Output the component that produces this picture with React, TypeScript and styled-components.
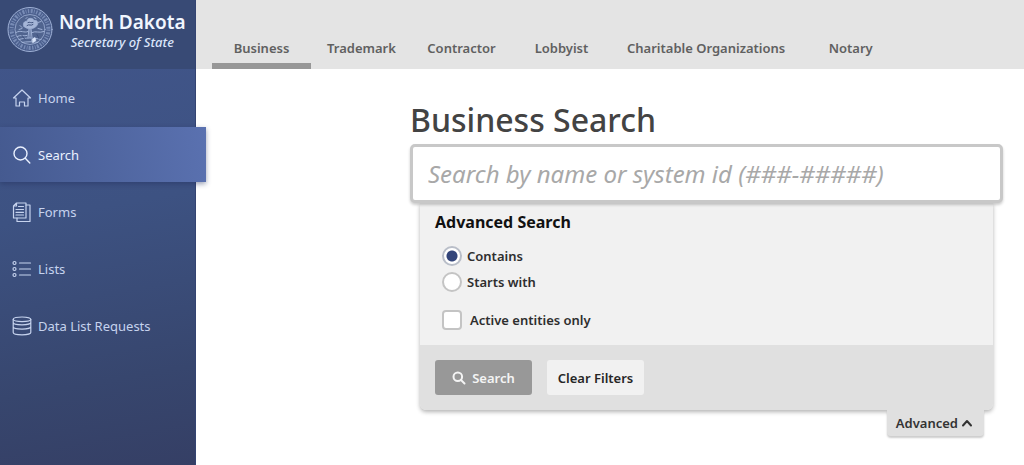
import React from "react";
import styled, { createGlobalStyle, css } from "styled-components";

const GlobalStyle = createGlobalStyle`
  *, *::before, *::after { box-sizing: border-box; }
  body {
    margin: 0;
    background: #fff;
    color: #333;
    font-family: "Noto Sans", "Open Sans", sans-serif;
    font-size: 13px;
    line-height: 20px;
  }
  button, input { font: inherit; }
  h1, h2, p, ul, fieldset { margin: 0; padding: 0; }
`;

const Page = styled.div`
  display: flex;
  min-height: 100vh;
`;

const Sidebar = styled.aside`
  flex: 0 0 196px;
  background: linear-gradient(170deg, #42568c 0%, #3d5282 45%, #37466e 80%, #353f65 100%);
  border-right: 1px solid #344472;
`;

const Brand = styled.div`
  display: flex;
  align-items: flex-start;
  gap: 6px;
  height: 69px;
  padding: 6px 0 0 7px;
  background: #384a75;
`;

const BrandText = styled.div`
  padding-top: 4px;
  text-align: center;
  color: #f1f6ff;
`;

const BrandName = styled.p`
  font-size: 19px;
  font-weight: 600;
  line-height: 24px;
  white-space: nowrap;
`;

const BrandOffice = styled.p`
  font-size: 13px;
  font-style: italic;
  font-weight: 500;
  line-height: 16px;
  color: #dbe6fb;
`;

const Menu = styled.nav`
  display: flex;
  flex-direction: column;
  gap: 2px;
  padding-top: 1px;
`;

const MenuLink = styled.a<{ $active?: boolean }>`
  display: flex;
  align-items: center;
  gap: 6px;
  height: 55px;
  padding-left: 12px;
  color: #c6d3ee;
  text-decoration: none;
  ${(p) =>
    p.$active &&
    css`
      margin-right: -11px;
      color: #eaf1ff;
      background: linear-gradient(80deg, #455a90 0%, #4d639c 40%, #5a71b0 100%);
      box-shadow: 0 2px 5px rgba(30, 45, 90, 0.45);
    `}
`;

const Content = styled.div`
  flex: 1;
  min-width: 0;
`;

const Tabs = styled.nav`
  display: flex;
  align-items: flex-end;
  gap: 1px;
  height: 69px;
  padding-left: 16px;
  background: #e4e4e4;
`;

const Tab = styled.a<{ $active?: boolean }>`
  min-width: 99px;
  padding: 0 15px 5px;
  border-bottom: 6px solid ${(p) => (p.$active ? "#979797" : "transparent")};
  color: #606060;
  font-weight: 600;
  text-align: center;
  text-decoration: none;
  white-space: nowrap;
`;

const Main = styled.main`
  padding: 29px 21px 28px 214px;
`;

const Title = styled.h1`
  padding-bottom: 2px;
  color: #434343;
  font-size: 32px;
  font-weight: 500;
  line-height: 44px;
`;

const SearchBox = styled.input`
  position: relative;
  display: block;
  width: 100%;
  height: 59px;
  padding: 0 15px;
  border: 3px solid #c8c8c8;
  border-radius: 5px;
  background: #fff;
  box-shadow: 0 2px 3px rgba(0, 0, 0, 0.2);
  color: #434343;
  font-size: 24px;
  &::placeholder {
    color: #a8a8a8;
    font-style: italic;
    opacity: 1;
  }
`;

const Panel = styled.section`
  margin: 0 10px;
  border-radius: 0 0 6px 6px;
  background: #f1f1f1;
  box-shadow: 0 2px 4px rgba(0, 0, 0, 0.3);
`;

const Filters = styled.div`
  padding: 8px 15px 15px;
`;

const PanelTitle = styled.h2`
  color: #111;
  font-size: 16px;
  font-weight: 700;
  line-height: 22px;
`;

const Options = styled.fieldset`
  display: flex;
  flex-direction: column;
  gap: 6px;
  margin: 13px 0 18px;
  border: 0;
`;

const Choice = styled.label<{ $wide?: boolean }>`
  display: flex;
  align-items: center;
  gap: ${(p) => (p.$wide ? 8 : 5)}px;
  padding-left: 7px;
  color: #2e2e2e;
  font-weight: 600;
`;

const choiceMark = css`
  appearance: none;
  flex: none;
  width: 20px;
  height: 20px;
  margin: 0;
  border: 2px solid #c4c4c4;
  background: #fff;
`;

const Radio = styled.input`
  ${choiceMark}
  border-radius: 50%;
  &:checked {
    border-color: #b9bec8;
    background: radial-gradient(circle, #33457a 0 5px, #fff 6px);
  }
`;

const Checkbox = styled.input`
  ${choiceMark}
  border-radius: 4px;
  &:checked {
    background: #33457a;
    box-shadow: inset 0 0 0 3px #fff;
  }
`;

const Actions = styled.div`
  display: flex;
  gap: 15px;
  padding: 15px;
  border-radius: 0 0 6px 6px;
  background: #e0e0e0;
`;

const Button = styled.button<{ $primary?: boolean }>`
  display: flex;
  align-items: center;
  justify-content: center;
  gap: 6px;
  min-width: 97px;
  height: 35px;
  padding: 0 10px;
  border: 0;
  border-radius: 3px;
  background: ${(p) => (p.$primary ? "#989898" : "#f1f1f1")};
  color: ${(p) => (p.$primary ? "#f4f4f4" : "#262626")};
  font-weight: 600;
`;

const ToggleRow = styled.div`
  display: flex;
  justify-content: flex-end;
  padding-right: 19px;
`;

const Toggle = styled.button`
  position: relative;
  display: flex;
  align-items: center;
  gap: 3px;
  height: 26px;
  padding: 0 11px 0 9px;
  border: 0;
  border-radius: 0 0 4px 4px;
  background: #e0e0e0;
  box-shadow: 0 2px 2px rgba(0, 0, 0, 0.2);
  color: #333;
  font-weight: 600;
`;

const Glyph = styled.svg`
  flex: none;
  fill: none;
  stroke: currentColor;
  stroke-linecap: round;
  stroke-linejoin: round;
`;

const Seal = () => (
  <Glyph width="46" height="47" viewBox="0 0 46 46" color="#9fb1d6" aria-label="State seal" role="img">
    <circle cx="23" cy="23" r="22" fill="#4b5f8d" strokeWidth="1" />
    <circle cx="23" cy="23" r="18.4" stroke="#8c9fc8" strokeWidth="4" strokeDasharray="1.3 1.6 2 1.2 0.8 1.5" strokeLinecap="butt" opacity="0.7" />
    <circle cx="23" cy="23" r="15" fill="#50648f" strokeWidth="0.8" />
    <path d="M23 31v-9M21 31l1-9M25 31l-1-9" strokeWidth="1" />
    <path d="M17 20c-2-3 1-6 3-5 0-4 6-4 7-1 4-1 5 4 2 6-3 3-9 3-12 0Z" fill="#a5b6d8" strokeWidth="0.8" />
    <path d="M9 26c5-3 8 1 12-1M25 26c4-2 7 1 12-1M10 30c4-2 7 0 10-1M12 33c6-2 15-2 22 0M15 36c4-1 12-1 16 0" strokeWidth="1" />
    <path d="M13 19l2 2M31 16l3-1M12 23l3-1M31 22l4 1M19 12l1-1M27 11l2 1" strokeWidth="1" />
    <path d="m25 33 3-2 1 3-3 2Z" fill="#d8e4fa" stroke="#d8e4fa" strokeWidth="0.7" />
    <path d="M20 19c2-2 4 1 6-1M21 16c2-1 3 1 5 0M15 29l3 4M30 28l2 4" stroke="#40537f" strokeWidth="1" />
  </Glyph>
);

const HomeIcon = () => (
  <Glyph width="20" height="20" viewBox="0 0 20 20" strokeWidth="1.2" aria-hidden="true">
    <path d="M4 10H1.500L10 2l8.500 8H16v8h-3.500v-4h-5v4H4Z" />
  </Glyph>
);

const SearchIcon = () => (
  <Glyph width="20" height="20" viewBox="0 0 20 20" strokeWidth="1.400" aria-hidden="true">
    <circle cx="8.500" cy="8.500" r="6.500" />
    <path d="m13.300 13.300 4.500 4.700" />
  </Glyph>
);

const FormsIcon = () => (
  <Glyph width="20" height="20" viewBox="0 0 20 20" strokeWidth="1.200" aria-hidden="true">
    <path d="M4.500 1H14v15H1.500V4ZM4.500 1v3h-3" />
    <path d="M14 3h4v16.500H5V16M6.500 4.500h5M4 7.500h7.500M4 10.300h7.500M4 13h7.500" />
  </Glyph>
);

const ListsIcon = () => (
  <Glyph width="20" height="20" viewBox="0 0 20 20" strokeWidth="1.200" aria-hidden="true">
    <circle cx="2.500" cy="4" r="1.500" />
    <circle cx="2.500" cy="10" r="1.500" />
    <circle cx="2.500" cy="16" r="1.500" />
    <path d="M7.500 4h11M7.500 10h11M7.500 16h11" />
  </Glyph>
);

const DataIcon = () => (
  <Glyph width="20" height="20" viewBox="0 0 20 20" strokeWidth="1.200" aria-hidden="true">
    <ellipse cx="10" cy="3.300" rx="8.800" ry="2.300" />
    <path d="M1.200 3.300v3.200c0 1.300 3.900 2.300 8.800 2.300s8.800-1 8.800-2.300V3.300M1.200 8.300v2.500c0 1.300 3.900 2.300 8.800 2.300s8.800-1 8.800-2.300V8.300M1.200 12.800v3.700c0 1.300 3.900 2.300 8.800 2.300s8.800-1 8.800-2.300v-3.700M1.200 6.500v6.500M18.800 6.500v6.500" />
  </Glyph>
);

const menu = [
  { label: "Home", Icon: HomeIcon },
  { label: "Search", Icon: SearchIcon, active: true },
  { label: "Forms", Icon: FormsIcon },
  { label: "Lists", Icon: ListsIcon },
  { label: "Data List Requests", Icon: DataIcon },
];

const tabs = ["Business", "Trademark", "Contractor", "Lobbyist", "Charitable Organizations", "Notary"];

export default function App() {
  return (
    <>
      <GlobalStyle />
      <Page>
        <Sidebar>
          <Brand>
            <Seal />
            <BrandText>
              <BrandName>North Dakota</BrandName>
              <BrandOffice>Secretary of State</BrandOffice>
            </BrandText>
          </Brand>
          <Menu aria-label="Main">
            {menu.map(({ label, Icon, active }) => (
              <MenuLink key={label} href="#" $active={active} aria-current={active ? "page" : undefined}>
                <Icon />
                {label}
              </MenuLink>
            ))}
          </Menu>
        </Sidebar>
        <Content>
          <Tabs aria-label="Registries">
            {tabs.map((tab, i) => (
              <Tab key={tab} href="#" $active={i === 0} aria-current={i === 0 ? "page" : undefined}>
                {tab}
              </Tab>
            ))}
          </Tabs>
          <Main>
            <Title id="title">Business Search</Title>
            <SearchBox type="text" aria-labelledby="title" placeholder="Search by name or system id (###-#####)" />
            <Panel aria-labelledby="advanced">
              <Filters>
                <PanelTitle id="advanced">Advanced Search</PanelTitle>
                <Options aria-label="Match">
                  <Choice>
                    <Radio type="radio" name="match" defaultChecked />
                    Contains
                  </Choice>
                  <Choice>
                    <Radio type="radio" name="match" />
                    Starts with
                  </Choice>
                </Options>
                <Choice $wide>
                  <Checkbox type="checkbox" />
                  Active entities only
                </Choice>
              </Filters>
              <Actions>
                <Button type="button" $primary>
                  <Glyph width="14" height="14" viewBox="0 0 14 14" strokeWidth="2" aria-hidden="true">
                    <circle cx="5.800" cy="5.800" r="4.300" />
                    <path d="m9 9 3.500 3.500" />
                  </Glyph>
                  Search
                </Button>
                <Button type="button">Clear Filters</Button>
              </Actions>
            </Panel>
            <ToggleRow>
              <Toggle type="button" aria-expanded="true">
                Advanced
                <Glyph width="12" height="12" viewBox="0 0 12 12" strokeWidth="2" aria-hidden="true">
                  <path d="m2 8.500 4-4.500 4 4.500" />
                </Glyph>
              </Toggle>
            </ToggleRow>
          </Main>
        </Content>
      </Page>
    </>
  );
}
